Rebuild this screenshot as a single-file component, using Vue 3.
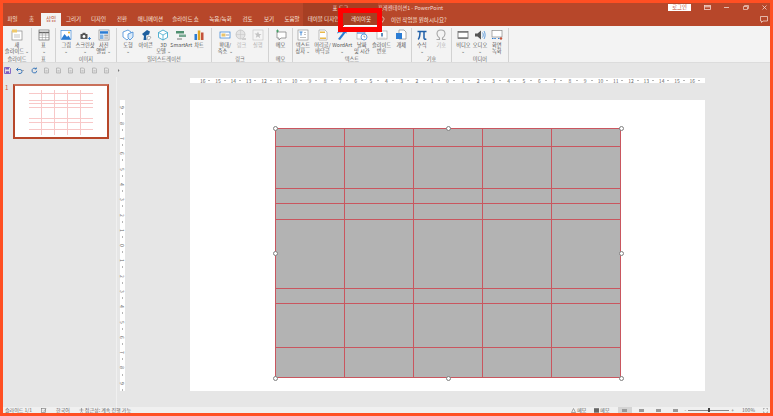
<script setup>
const tabs = [
  { label: '파일', w: 19 },
  { label: '홈', w: 19 },
  { label: '삽입', w: 20, active: true },
  { label: '그리기', w: 25 },
  { label: '디자인', w: 25 },
  { label: '전환', w: 22 },
  { label: '애니메이션', w: 35 },
  { label: '슬라이드 쇼', w: 35 },
  { label: '녹음/녹화', w: 35 },
  { label: '검토', w: 19 },
  { label: '보기', w: 24 },
  { label: '도움말', w: 22 },
  { label: '테이블 디자인', w: 41 },
  { label: '레이아웃', w: 34 },
]

const icons = {
  slide: '<rect x="1" y="2" width="10" height="9" fill="#fff" stroke="#8a8a8a" stroke-width=".7"/><rect x="1" y="0.5" width="5" height="3" fill="#f0c96a"/><path d="M3 6h6M3 8h6" stroke="#aaa" stroke-width=".7"/>',
  table: '<rect x="1" y="1" width="10" height="10" fill="#fff" stroke="#666" stroke-width=".7"/><path d="M1 3.500h10" stroke="#666" stroke-width="1.600"/><path d="M1 6h10M1 8.500h10M4.300 3v8M7.700 3v8" stroke="#888" stroke-width=".5"/>',
  picture: '<rect x="1" y="1.500" width="10" height="9" fill="#fff" stroke="#2b7cd3" stroke-width=".6"/><path d="M1 10.500 4.500 5l2.500 3 1.500-1.500 2.500 4z" fill="#2b7cd3"/><circle cx="9" cy="3.500" r="1" fill="#f0b429"/>',
  shot: '<rect x="1.500" y="5" width="7" height="5" rx=".6" fill="#555"/><circle cx="5" cy="7.500" r="1.400" fill="#fff"/><rect x="3.500" y="3.800" width="3" height="1.400" fill="#555"/><path d="M9 9.500h3M10.500 8v3" stroke="#2b7cd3" stroke-width=".9"/>',
  album: '<rect x="1" y="1" width="10" height="10" fill="#fff" stroke="#777" stroke-width=".6"/><rect x="2" y="2.200" width="8" height="2.500" fill="#2b7cd3"/><rect x="2" y="5.500" width="3.500" height="4.500" fill="#7fb2e5"/><rect x="6.200" y="5.500" width="3.800" height="2" fill="#a9a9a9"/><rect x="6.200" y="8" width="3.800" height="2" fill="#c7c7c7"/>',
  shape: '<path d="M1 3 6 1l3 2v4L5 11 1 8z" fill="#fff" stroke="#2b7cd3" stroke-width=".7"/><path d="M6 5l5-2v5l-3 3-2-2z" fill="#dcebf9" stroke="#2b7cd3" stroke-width=".7"/>',
  icon: '<path d="M2 5 7 1l3 1.500-1 3-3 1 .5 4.500H3.500L4 7z" fill="#1f5f9e"/><path d="M8 7l3 1-2 3-2-1z" fill="#fff" stroke="#777" stroke-width=".5"/>',
  cube: '<path d="M6 1l4.500 2.500v5L6 11 1.500 8.500v-5z" fill="#fff" stroke="#2b9fc7" stroke-width=".8"/><path d="M1.500 3.500 6 6l4.500-2.500M6 6v5" fill="none" stroke="#2b9fc7" stroke-width=".7"/>',
  smart: '<rect x="1" y="2" width="8" height="2.500" fill="#4f8f6f"/><rect x="4" y="5.500" width="7" height="2.500" fill="#79a892"/><rect x="2" y="9" width="5" height="2" fill="#b5b5b5"/>',
  chart: '<rect x="1.500" y="5" width="2.500" height="6" fill="#2b7cd3"/><rect x="4.800" y="1.500" width="2.500" height="9.500" fill="#e0a526"/><rect x="8" y="3.500" width="2.500" height="7.500" fill="#c4523a"/>',
  zoom: '<rect x="1" y="3" width="10" height="6" fill="#fff" stroke="#2b7cd3" stroke-width=".7"/><rect x="2.500" y="4.500" width="4" height="3" fill="#e9c46a"/><path d="M7 6h3" stroke="#777" stroke-width=".7"/>',
  link: '<circle cx="5.500" cy="5.500" r="4.500" fill="#e4e4e4" stroke="#bdbdbd" stroke-width=".7"/><path d="M1 5.500h9M5.500 1v9" stroke="#c4c4c4" stroke-width=".5"/><path d="M7 9h4v2H7z" fill="#cfcfcf"/>',
  action: '<rect x="1" y="1" width="10" height="10" fill="#f5f5f5" stroke="#c4c4c4" stroke-width=".6"/><path d="M6 2.500l1 2.400 2.500.2-2 1.600.7 2.500L6 7.400 3.800 8.700l.7-2.500-2-1.600 2.500-.2z" fill="#c4c4c4"/>',
  memo: '<path d="M2 3h9v6H6l-2 2V9H2z" fill="#fff" stroke="#777" stroke-width=".7"/><path d="M1 2h3M2.500 .5v3" stroke="#3c9a5f" stroke-width=".9"/>',
  textbox: '<rect x="1" y="1" width="10" height="10" fill="#fff" stroke="#888" stroke-width=".6"/><path d="M2.500 3h3M4 3v3.500" stroke="#2b7cd3" stroke-width=".9"/><path d="M3 8.500h6M7 3.500h2M7 5.500h2" stroke="#999" stroke-width=".6"/>',
  header: '<path d="M2 1h6l2 2v8H2z" fill="#fff" stroke="#999" stroke-width=".6"/><rect x="3" y="2.500" width="5" height="1.500" fill="#e9b949"/><rect x="3" y="8.500" width="6" height="1.500" fill="#e9b949"/>',
  wordart: '<path d="M2 10 9 1l1.500 1.500L4 11z" fill="#2b7cd3"/><path d="M1 4c3-1.500 6-1.500 10 0" fill="none" stroke="#2b7cd3" stroke-width=".8"/>',
  date: '<rect x="1" y="2" width="8" height="8" fill="#fff" stroke="#999" stroke-width=".6"/><path d="M1 4h8" stroke="#2b7cd3" stroke-width="1"/><circle cx="8" cy="8" r="3" fill="#fff" stroke="#2b7cd3" stroke-width=".7"/><path d="M8 6.500V8h1.300" fill="none" stroke="#555" stroke-width=".5"/>',
  number: '<rect x="1" y="2" width="10" height="8" fill="#fff" stroke="#999" stroke-width=".6"/><path d="M6 4v3.500" stroke="#1f5f9e" stroke-width="1.400"/><path d="M2.500 9h7" stroke="#bbb" stroke-width=".5"/>',
  object: '<path d="M4 1h5l2 2v7H4z" fill="#fff" stroke="#777" stroke-width=".6"/><rect x="1" y="4" width="6" height="6" fill="#2b7cd3"/>',
  equation: '<path d="M1.500 2.500h9M4 2.500c0 4-.5 6.500-1.800 8M8 2.500v6.500c0 1 .8 1.500 2.300 1" fill="none" stroke="#1f5fa8" stroke-width="1.500"/>',
  symbol: '<path d="M1.500 10.500h3V9C3 8 2 6.500 2 4.800 2 2.500 3.800 1 6 1s4 1.500 4 3.800c0 1.700-1 3.200-2.500 4.200v1.500h3" fill="none" stroke="#a8a8a8" stroke-width="1.100"/>',
  video: '<rect x="1" y="2.500" width="10" height="7" fill="#fff" stroke="#555" stroke-width=".7"/><path d="M1 2.500h10v1.200H1zM1 8.300h10v1.200H1z" fill="#777"/>',
  audio: '<path d="M1 4.500h2.500L7 1.500v9L3.500 7.500H1z" fill="#555"/><path d="M8.500 3.500c1 1.500 1 3.500 0 5M10 2c1.500 2.500 1.500 5.500 0 8" fill="none" stroke="#2b7cd3" stroke-width=".7"/>',
  record: '<rect x="1" y="1.500" width="10" height="6.500" fill="#fff" stroke="#777" stroke-width=".6"/><path d="M1 9.500h4M7 9.500h2" stroke="#2b7cd3" stroke-width="1" stroke-dasharray="1.500 .8"/><circle cx="10" cy="9.500" r="1.200" fill="#c4523a"/>',
}

// pad = [left, right] so the items sit where the ribbon has them
const groups = [
  { name: '슬라이드', w: 29, pad: [0, 0], items: [{ icon: 'slide', lines: ['새', '슬라이드 ⌄'] }] },
  { name: '표', w: 24, pad: [0, 0], items: [{ icon: 'table', lines: ['표', '⌄'] }] },
  { name: '이미지', w: 61, pad: [1, 3], items: [
    { icon: 'picture', lines: ['그림', '⌄'] },
    { icon: 'shot', lines: ['스크린샷', '⌄'] },
    { icon: 'album', lines: ['사진', '앨범 ⌄'] },
  ] },
  { name: '일러스트레이션', w: 95, pad: [2, 3], items: [
    { icon: 'shape', lines: ['도형', '⌄'] },
    { icon: 'icon', lines: ['아이콘'] },
    { icon: 'cube', lines: ['3D', '모델 ⌄'] },
    { icon: 'smart', lines: ['SmartArt'] },
    { icon: 'chart', lines: ['차트'] },
  ] },
  { name: '링크', w: 57, pad: [5, 2], items: [
    { icon: 'zoom', lines: ['확대/', '축소 ⌄'] },
    { icon: 'link', lines: ['링크'], off: true },
    { icon: 'action', lines: ['실행'], off: true },
  ] },
  { name: '메모', w: 24, pad: [0, 0], items: [{ icon: 'memo', lines: ['메모'] }] },
  { name: '텍스트', w: 119, pad: [0, 0], items: [
    { icon: 'textbox', lines: ['텍스트', '상자 ⌄'] },
    { icon: 'header', lines: ['머리글/', '바닥글'] },
    { icon: 'wordart', lines: ['WordArt', '⌄'] },
    { icon: 'date', lines: ['날짜', '및 시간'] },
    { icon: 'number', lines: ['슬라이드', '번호'] },
    { icon: 'object', lines: ['개체'] },
  ] },
  { name: '기호', w: 40, pad: [0, 0], items: [
    { icon: 'equation', lines: ['수식', '⌄'] },
    { icon: 'symbol', lines: ['기호'], off: true },
  ] },
  { name: '미디어', w: 57, pad: [3, 3], items: [
    { icon: 'video', lines: ['비디오', '⌄'] },
    { icon: 'audio', lines: ['오디오', '⌄'] },
    { icon: 'record', lines: ['화면', '녹화'] },
  ] },
]

const hNumbers = [16, 15, 14, 13, 12, 11, 10, 9, 8, 7, 6, 5, 4, 3, 2, 1, 0, 1, 2, 3, 4, 5, 6, 7, 8, 9, 10, 11, 12, 13, 14, 15, 16]
const vNumbers = [9, 8, 7, 6, 5, 4, 3, 2, 1, 0, 1, 2, 3, 4, 5, 6, 7, 8, 9]

const qatDim = [1, 2, 3, 4, 5, 6]
const cellCount = 40
const handles = ['tl', 'tc', 'tr', 'ml', 'mr', 'bl', 'bc', 'br']
</script>

<template>
  <div class="frame">
    <div class="top">
      <div class="titlebar">
        <div class="title-left"></div>
        <div class="context-title">표 도구</div>
        <div class="doc-title">프레젠테이션1 - PowerPoint</div>
        <div class="win">
          <span class="login">로그인</span>
          <svg width="7" height="5" viewBox="0 0 7 5"><rect x=".5" y=".5" width="6" height="4" fill="none" stroke="#f3d8cf" stroke-width=".8"/><path d="M.5 1.800h6" stroke="#f3d8cf"/></svg>
          <svg width="7" height="5" viewBox="0 0 7 5"><path d="M1 2.500h5" stroke="#f3d8cf" stroke-width=".8"/></svg>
          <svg width="7" height="5" viewBox="0 0 7 5"><path d="M1.500 1.500h4v3h-4zM2.500 1.500V.5h4v3h-1" fill="none" stroke="#f3d8cf" stroke-width=".7"/></svg>
          <svg width="7" height="5" viewBox="0 0 7 5"><path d="M1.500 .5l4 4M5.500 .5l-4 4" stroke="#f3d8cf" stroke-width=".8"/></svg>
        </div>
      </div>
      <div class="tabs">
        <span
          v-for="tab in tabs"
          :key="tab.label"
          class="tab"
          :class="{ active: tab.active, layout: tab.label === '레이아웃' }"
          :style="{ width: tab.w + 'px' }"
        >{{ tab.label }}</span>
        <span class="tell">
          <svg width="6" height="8" viewBox="0 0 6 8"><path d="M1 3a2 2 0 1 1 3.400 1.400C4 5 3.800 5.200 3.800 6H2.200C2.200 5.200 2 5 1.600 4.400" fill="none" stroke="#f8e6df" stroke-width=".7"/></svg>
          이런 작업을 원하시나요?
        </span>
        <svg class="comment" width="8" height="7" viewBox="0 0 8 7"><path d="M.5.500h7v4.500H3L1.500 6.500V5h-1z" fill="none" stroke="#f8e6df" stroke-width=".7"/></svg>
      </div>
      <div class="red-box"></div>
    </div>

    <div class="ribbon">
      <div
        v-for="g in groups"
        :key="g.name"
        class="group"
        :style="{ width: g.w + 'px' }"
      >
        <div class="group-items" :style="{ paddingLeft: g.pad[0] + 'px', paddingRight: g.pad[1] + 'px' }">
          <div v-for="item in g.items" :key="item.icon" class="item" :class="{ off: item.off }">
            <svg width="12" height="12" viewBox="0 0 12 12" v-html="icons[item.icon]"></svg>
            <span v-for="line in item.lines" :key="line" class="item-line">{{ line }}</span>
          </div>
        </div>
        <div class="group-name">{{ g.name }}</div>
      </div>
    </div>

    <div class="qat">
      <svg width="7" height="7" viewBox="0 0 7 7"><path d="M.5.500h5l1 1v5h-6z" fill="none" stroke="#7a5cc0" stroke-width=".9"/><path d="M1.500.500h3.500v2H1.500zM1.800 4.200h3.400v2.300H1.800z" fill="#7a5cc0"/></svg>
      <svg class="qat-undo" width="9" height="7" viewBox="0 0 9 7"><path d="M1.500 2.500h3.500a2 2 0 0 1 0 4H3.500M1.500 2.500 3.200.8M1.500 2.500 3.200 4.200" fill="none" stroke="#2f6fb5" stroke-width=".9"/><path d="M7 3l1 1 1-1" fill="none" stroke="#777" stroke-width=".5"/></svg>
      <svg class="qat-redo" width="7" height="7" viewBox="0 0 7 7"><path d="M5.800 3.800a2.400 2.400 0 1 1-1-2.200M5.300.5v1.500H3.800" fill="none" stroke="#2f6fb5" stroke-width=".9"/></svg>
      <svg v-for="n in qatDim" :key="n" class="qat-dim" width="7" height="7" viewBox="0 0 7 7"><path d="M1.500 1h3l1 1v4h-4z" fill="none" stroke="#a6a6a6" stroke-width=".7"/><path d="M2.500 3.500h2M2.500 4.800h2" stroke="#a6a6a6" stroke-width=".5"/></svg>
      <svg class="qat-more" width="4" height="7" viewBox="0 0 4 7"><path d="M1 2l1.500 1.500L1 5z" fill="#777"/></svg>
    </div>

    <div class="main">
      <aside class="pane">
        <span class="num">1</span>
        <div class="thumb">
          <div class="mini-table">
            <i v-for="n in cellCount" :key="n"></i>
          </div>
        </div>
      </aside>
      <div class="work">
        <div class="h-ruler">
          <span v-for="(n, i) in hNumbers" :key="i">{{ n }}</span>
        </div>
        <div class="work-row">
          <div class="v-ruler">
            <span v-for="(n, i) in vNumbers" :key="i">{{ n }}</span>
          </div>
          <div class="slide">
            <div class="table-wrap">
              <div class="table">
                <i v-for="n in cellCount" :key="n"></i>
              </div>
              <b v-for="h in handles" :key="h" class="handle" :class="h"></b>
            </div>
          </div>
        </div>
      </div>
    </div>

    <div class="status">
      <div class="status-left">
        <span>슬라이드 1/1</span>
        <svg width="6" height="5" viewBox="0 0 6 5"><rect x=".5" y=".5" width="4" height="4" fill="none" stroke="#777" stroke-width=".6"/><path d="M2 2.500l1 1 2-3" fill="none" stroke="#777" stroke-width=".5"/></svg>
        <span>한국어</span>
        <span class="access">
          <svg width="5" height="5" viewBox="0 0 5 5"><circle cx="2.500" cy="1" r=".7" fill="#777"/><path d="M.5 2h4M2.500 2v1.200L1.500 4.800M2.500 3.200l1 1.600" fill="none" stroke="#777" stroke-width=".5"/></svg>
          접근성: 계속 진행 가능
        </span>
      </div>
      <div class="status-right">
        <span class="note">
          <svg width="5" height="5" viewBox="0 0 5 5"><path d="M2.500.5 4.500 4.500h-4z" fill="none" stroke="#777" stroke-width=".6"/></svg>
          메모
        </span>
        <span class="note">
          <svg width="5" height="5" viewBox="0 0 5 5"><rect width="5" height="4.500" y=".2" fill="#666"/></svg>
          메모
        </span>
        <div class="views">
          <i class="view on"></i>
          <i class="view"></i>
          <i class="view"></i>
          <i class="view"></i>
        </div>
        <div class="zoom">
          <span>-</span>
          <div class="zoom-bar"><b></b></div>
          <span>+</span>
        </div>
        <span>100%</span>
        <svg width="5" height="5" viewBox="0 0 5 5"><path d="M.5 1.500v-1h1M3.500.500h1v1M4.500 3.500v1h-1M1.500 4.500h-1v-1" fill="none" stroke="#777" stroke-width=".6"/></svg>
      </div>
    </div>
  </div>
</template>

<style scoped>
.frame {
  width: 773px;
  height: 416px;
  box-sizing: border-box;
  border: 3px solid #ff4f23;
  background: #e6e6e6;
  display: flex;
  flex-direction: column;
  overflow: hidden;
  font-family: "Noto Sans CJK KR", "Noto Sans", sans-serif;
  color: #444;
}

.top {
  position: relative;
  background: #b7472a;
  height: 23px;
  flex-shrink: 0;
}

.titlebar {
  height: 10px;
  display: flex;
  align-items: flex-start;
  position: relative;
  color: #f6ddd5;
  font-size: 5.3px;
}

.title-left {
  width: 300px;
}

.context-title {
  width: 75px;
  height: 23px;
  padding-top: 1px;
  box-sizing: border-box;
  text-align: center;
  line-height: 8px;
  background: #a63f23;
}

.doc-title {
  padding-top: 1px;
  line-height: 8px;
}

.win {
  margin-left: auto;
  display: flex;
  align-items: center;
  height: 8px;
  padding-right: 2px;
  gap: 12px;
}

.login {
  background: #fff;
  color: #b7472a;
  width: 23px;
  height: 7px;
  line-height: 7px;
  text-align: center;
  margin-right: 1px;
}

.tabs {
  height: 13px;
  display: flex;
  align-items: stretch;
  position: relative;
  color: #f8e6df;
  font-size: 5.5px;
}

.tab {
  text-align: center;
  line-height: 13px;
  white-space: nowrap;
  flex-shrink: 0;
}

.tab.active {
  background: #f3f3f3;
  color: #b7472a;
}

.tab.layout {
  border-bottom: 1px solid #fff;
  box-sizing: border-box;
}

.tell {
  display: flex;
  align-items: center;
  gap: 6px;
  margin-left: 1px;
  white-space: nowrap;
}

.comment {
  position: absolute;
  right: 2px;
  top: 3px;
}

/* annotation on top of the screenshot */
.red-box {
  position: absolute;
  left: 335px;
  top: 5px;
  width: 34px;
  height: 14px;
  border: 5px solid #ff0000;
}

.ribbon {
  height: 37px;
  flex-shrink: 0;
  background: #f3f3f3;
  border-bottom: 1px solid #dcdcdc;
  box-sizing: border-box;
  display: flex;
}

.group {
  display: flex;
  flex-direction: column;
  flex-shrink: 0;
  box-sizing: border-box;
  border-right: 1px solid #d2d2d2;
  margin-top: 2px;
}

.group-items {
  flex: 1;
  display: flex;
  min-height: 0;
  padding-top: 1px;
}

.item {
  flex: 1 1 0;
  min-width: 0;
  display: flex;
  flex-direction: column;
  align-items: center;
  font-size: 5.2px;
  line-height: 6px;
  color: #555;
  white-space: nowrap;
}

.item svg {
  margin-bottom: 1px;
  flex-shrink: 0;
}

.item.off {
  color: #b0b0b0;
}

.item-line {
  display: block;
}

.group-name {
  text-align: center;
  font-size: 5.2px;
  line-height: 7px;
  color: #666;
}

.qat {
  height: 14px;
  flex-shrink: 0;
  display: flex;
  align-items: center;
  padding-left: 1px;
  background: #e6e6e6;
}

.qat-undo {
  margin-left: 4px;
}

.qat-redo {
  margin-left: 7px;
}

.qat-dim {
  margin-left: 5px;
}

.qat-more {
  margin-left: 7px;
}

.main {
  flex: 1;
  min-height: 0;
  display: flex;
}

.pane {
  width: 114px;
  flex-shrink: 0;
  box-sizing: border-box;
  border-right: 1px solid #f0f0f0;
  padding: 7px 0 0 10px;
  position: relative;
}

.num {
  position: absolute;
  left: 2px;
  top: 7px;
  font-size: 6px;
  line-height: 7px;
  color: #c4523a;
}

.thumb {
  width: 96px;
  height: 55px;
  box-sizing: border-box;
  background: #fff;
  border: 2px solid #b7472a;
  border-top-color: #c9705a;
  padding: 4px 14px 2px 14px;
}

.mini-table {
  height: 100%;
  display: grid;
  grid-template-columns: repeat(5, 1fr);
  grid-template-rows: 18fr 42fr 15fr 16fr 69fr 15fr 44fr 30fr;
  gap: 1px;
  background: #f8c8c8;
}

.mini-table i {
  background: #fff;
}

.work {
  flex: 1;
  min-width: 0;
}

.h-ruler {
  margin: 1px 0 0 73px;
  width: 515px;
  height: 5px;
  background: #fff;
  display: flex;
  justify-content: center;
  font-size: 5px;
  line-height: 5px;
  color: #666;
}

.h-ruler span {
  width: 15.3px;
  flex-shrink: 0;
  text-align: center;
  background: linear-gradient(#b5b5b5, #b5b5b5) right center / 2px 1px no-repeat;
}

.work-row {
  display: flex;
  margin-top: 17px;
}

.v-ruler {
  margin-left: 3px;
  width: 5px;
  height: 291px;
  background: #fff;
  display: flex;
  flex-direction: column;
  justify-content: center;
  font-size: 5px;
  color: #666;
}

.v-ruler span {
  height: 15.3px;
  flex-shrink: 0;
  writing-mode: vertical-rl;
  text-align: center;
  line-height: 5px;
  background: linear-gradient(#b5b5b5, #b5b5b5) center bottom / 1px 2px no-repeat;
}

.slide {
  margin-left: 65px;
  width: 515px;
  height: 291px;
  box-sizing: border-box;
  background: #fff;
  padding: 28px 0 0 85px;
}

.table-wrap {
  position: relative;
  width: 346px;
  height: 250px;
}

.table {
  width: 100%;
  height: 100%;
  box-sizing: border-box;
  display: grid;
  grid-template-columns: repeat(5, 68px);
  grid-template-rows: 17px 41px 14px 15px 68px 14px 43px 29px;
  gap: 1px;
  padding: 1px;
  background: #c9565f;
}

.table i {
  background: #b3b3b3;
}

.handle {
  position: absolute;
  width: 5px;
  height: 5px;
  margin: -2.5px 0 0 -2.5px;
  box-sizing: border-box;
  border: 1px solid #7f7f7f;
  border-radius: 50%;
  background: #fff;
}

.tl { left: 0; top: 0; }
.tc { left: 50%; top: 0; }
.tr { left: 100%; top: 0; }
.ml { left: 0; top: 50%; }
.mr { left: 100%; top: 50%; }
.bl { left: 0; top: 100%; }
.bc { left: 50%; top: 100%; }
.br { left: 100%; top: 100%; }

.status {
  height: 6px;
  flex-shrink: 0;
  background: #f0f0f0;
  display: flex;
  justify-content: space-between;
  align-items: center;
  font-size: 5px;
  line-height: 6px;
  color: #666;
  white-space: nowrap;
}

.status-left {
  display: flex;
  align-items: center;
  gap: 9px;
  padding-left: 2px;
}

.access,
.note {
  display: flex;
  align-items: center;
  gap: 1px;
}

.status-right {
  display: flex;
  align-items: center;
  gap: 8px;
  padding-right: 2px;
}

.views {
  display: flex;
  gap: 3px;
}

.view {
  width: 14px;
  height: 6px;
  background: linear-gradient(#999, #999) center / 5px 3px no-repeat;
}

.view.on {
  background-color: #d4d4d4;
}

.zoom {
  display: flex;
  align-items: center;
  gap: 2px;
  margin-left: -6px;
}

.zoom-bar {
  position: relative;
  width: 41px;
  height: 1px;
  background: #888;
}

.zoom-bar b {
  position: absolute;
  left: 20px;
  top: -1.5px;
  width: 2px;
  height: 4px;
  background: #444;
}
</style>
